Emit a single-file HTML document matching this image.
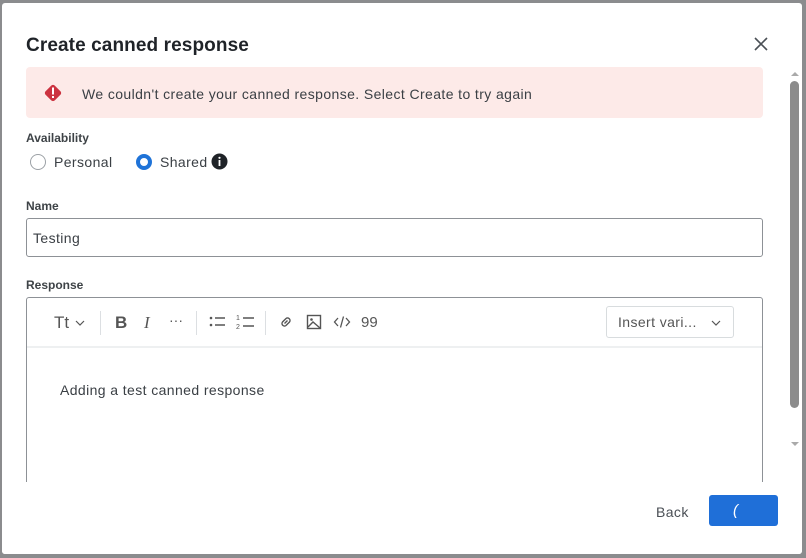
<!DOCTYPE html>
<html><head><style>
*{box-sizing:border-box;margin:0;padding:0}
body{width:806px;height:558px;background:#8b8c8e;font-family:"Liberation Sans",sans-serif;position:relative;overflow:hidden;color:#2f3941}
.m{position:absolute;left:2px;top:3px;width:800px;height:551px;background:#fff;border-radius:3px;overflow:hidden}
.abs{position:absolute}
h1{position:absolute;left:24px;top:32px;font-size:19px;font-weight:bold;color:#1f2328;letter-spacing:0.1px}
.err{left:24px;top:64px;width:737px;height:51px;background:#fdeae8;border-radius:4px}
.lbl{font-size:12px;font-weight:bold;color:#3e4347}
.t{font-size:14px;color:#3a3f44;letter-spacing:0.4px}
.inp{left:24px;top:215px;width:737px;height:39px;border:1px solid #8d9196;border-radius:3px}
.ed{left:24px;top:294px;width:737px;height:200px;border:1px solid #8d9196;border-top-left-radius:3px;border-top-right-radius:3px}
.tb{position:absolute;left:0;top:0;right:0;height:50px;border-bottom:2px solid #eef0f1}
.sep{position:absolute;top:13px;width:1px;height:24px;background:#dcdfe2}
.foot{left:0;top:479px;width:800px;height:72px;background:#fff}
</style></head><body>
<div class="m">
<h1>Create canned response</h1>
<svg class="abs" style="left:751px;top:33px" width="16" height="16" viewBox="0 0 16 16"><path d="M2 2L14 14M14 2L2 14" stroke="#4a4f55" stroke-width="1.6"/></svg>
<div class="abs err"></div>
<svg class="abs" style="left:40px;top:79px" width="22" height="22" viewBox="0 0 22 22"><rect x="4.5" y="4.5" width="13" height="13" rx="2.5" transform="rotate(45 11 11)" fill="#cc3340"/><rect x="10" y="5.5" width="2" height="7" fill="#fff"/><rect x="10" y="14" width="2" height="2" fill="#fff"/></svg>
<div class="abs t" style="left:80px;top:83px">We couldn't create your canned response. Select Create to try again</div>
<div class="abs lbl" style="left:24px;top:128px">Availability</div>
<div class="abs" style="left:28px;top:151px;width:16px;height:16px;border:1px solid #9ca1a6;border-radius:50%"></div>
<div class="abs t" style="left:52px;top:151px">Personal</div>
<div class="abs" style="left:134px;top:151px;width:16px;height:16px;border:4.5px solid #1f73d8;border-radius:50%"></div>
<div class="abs t" style="left:158px;top:151px">Shared</div>
<svg class="abs" style="left:209px;top:150px" width="17" height="17" viewBox="0 0 17 17"><circle cx="8.5" cy="8.5" r="8" fill="#1f2328"/><rect x="7.6" y="7" width="1.8" height="6" fill="#fff"/><circle cx="8.5" cy="4.8" r="1.1" fill="#fff"/></svg>
<div class="abs lbl" style="left:24px;top:196px">Name</div>
<div class="abs inp"></div>
<div class="abs t" style="left:31px;top:227px">Testing</div>
<div class="abs lbl" style="left:24px;top:275px">Response</div>
<div class="abs ed"><div class="tb">
<div class="abs" style="left:27px;top:15px;font-size:17px;color:#555">Tt</div>
<svg class="abs" style="left:48px;top:21px" width="10" height="8"><path d="M1 2l4 4 4-4" fill="none" stroke="#555" stroke-width="1.2"/></svg>
<div class="sep" style="left:73px"></div>
<div class="abs" style="left:88px;top:15px;font-size:17px;font-weight:bold;color:#555">B</div>
<div class="abs" style="left:117px;top:15px;font-size:17px;font-style:italic;font-family:'Liberation Serif',serif;color:#555">I</div>
<div class="abs" style="left:142px;top:14px;font-size:14px;color:#555">···</div>
<div class="sep" style="left:169px"></div>
<svg class="abs" style="left:181px;top:16px" width="18" height="16"><circle cx="3" cy="4" r="1.3" fill="#555"/><circle cx="3" cy="11" r="1.3" fill="#555"/><path d="M7 4h10M7 11h10" stroke="#555" stroke-width="1.4"/></svg>
<svg class="abs" style="left:209px;top:15px" width="20" height="18"><text x="0" y="7" font-size="7" fill="#555" font-family="Liberation Sans">1</text><text x="0" y="16" font-size="7" fill="#555" font-family="Liberation Sans">2</text><path d="M7 5h11M7 13h11" stroke="#555" stroke-width="1.4"/></svg>
<div class="sep" style="left:238px"></div>
<svg class="abs" style="left:251px;top:16px" width="16" height="16" viewBox="0 0 16 16"><path d="M6.5 9.5l3-3M6 6.5l2-2a2.5 2.5 0 013.5 3.5l-2 2M10 9.5l-2 2a2.5 2.5 0 01-3.5-3.5l2-2" fill="none" stroke="#555" stroke-width="1.4"/></svg>
<svg class="abs" style="left:279px;top:16px" width="16" height="16" viewBox="0 0 16 16"><rect x="1.5" y="1.5" width="13" height="13" fill="none" stroke="#555" stroke-width="1.4"/><circle cx="5.5" cy="5.5" r="1.3" fill="#555"/><path d="M2 13l5-5 7 6" fill="none" stroke="#555" stroke-width="1.4"/></svg>
<svg class="abs" style="left:306px;top:16px" width="18" height="16" viewBox="0 0 18 16"><path d="M5 4L1.5 8 5 12M13 4l3.5 4-3.5 4M10.5 2.5l-3 11" fill="none" stroke="#555" stroke-width="1.3"/></svg>
<div class="abs" style="left:334px;top:16px;font-size:15px;color:#555">99</div>
<div class="abs" style="left:579px;top:8px;width:128px;height:32px;border:1px solid #d8dcde;border-radius:3px"></div>
<div class="abs t" style="left:591px;top:16px;color:#555">Insert vari...</div>
<svg class="abs" style="left:684px;top:21px" width="10" height="8"><path d="M1 2l4 4 4-4" fill="none" stroke="#555" stroke-width="1.2"/></svg>
</div>
<div class="abs t" style="left:33px;top:84px">Adding a test canned response</div>
</div>
<div class="abs foot"></div>
<div class="abs t" style="left:654px;top:501px;color:#4a4f55">Back</div>
<div class="abs" style="left:707px;top:492px;width:69px;height:31px;background:#1f6fd8;border-radius:3px"></div>
<div class="abs" style="left:731px;top:499px;color:#fff;font-size:15px;font-style:italic">(</div>
<div class="abs" style="left:788px;top:78px;width:9px;height:327px;background:#8c8c8c;border-radius:5px"></div>
<svg class="abs" style="left:788px;top:67px" width="10" height="8"><path d="M1 6l4-4 4 4z" fill="#aaa"/></svg>
<svg class="abs" style="left:788px;top:437px" width="10" height="8"><path d="M1 2l4 4 4-4z" fill="#aaa"/></svg>
</div>
</body></html>
